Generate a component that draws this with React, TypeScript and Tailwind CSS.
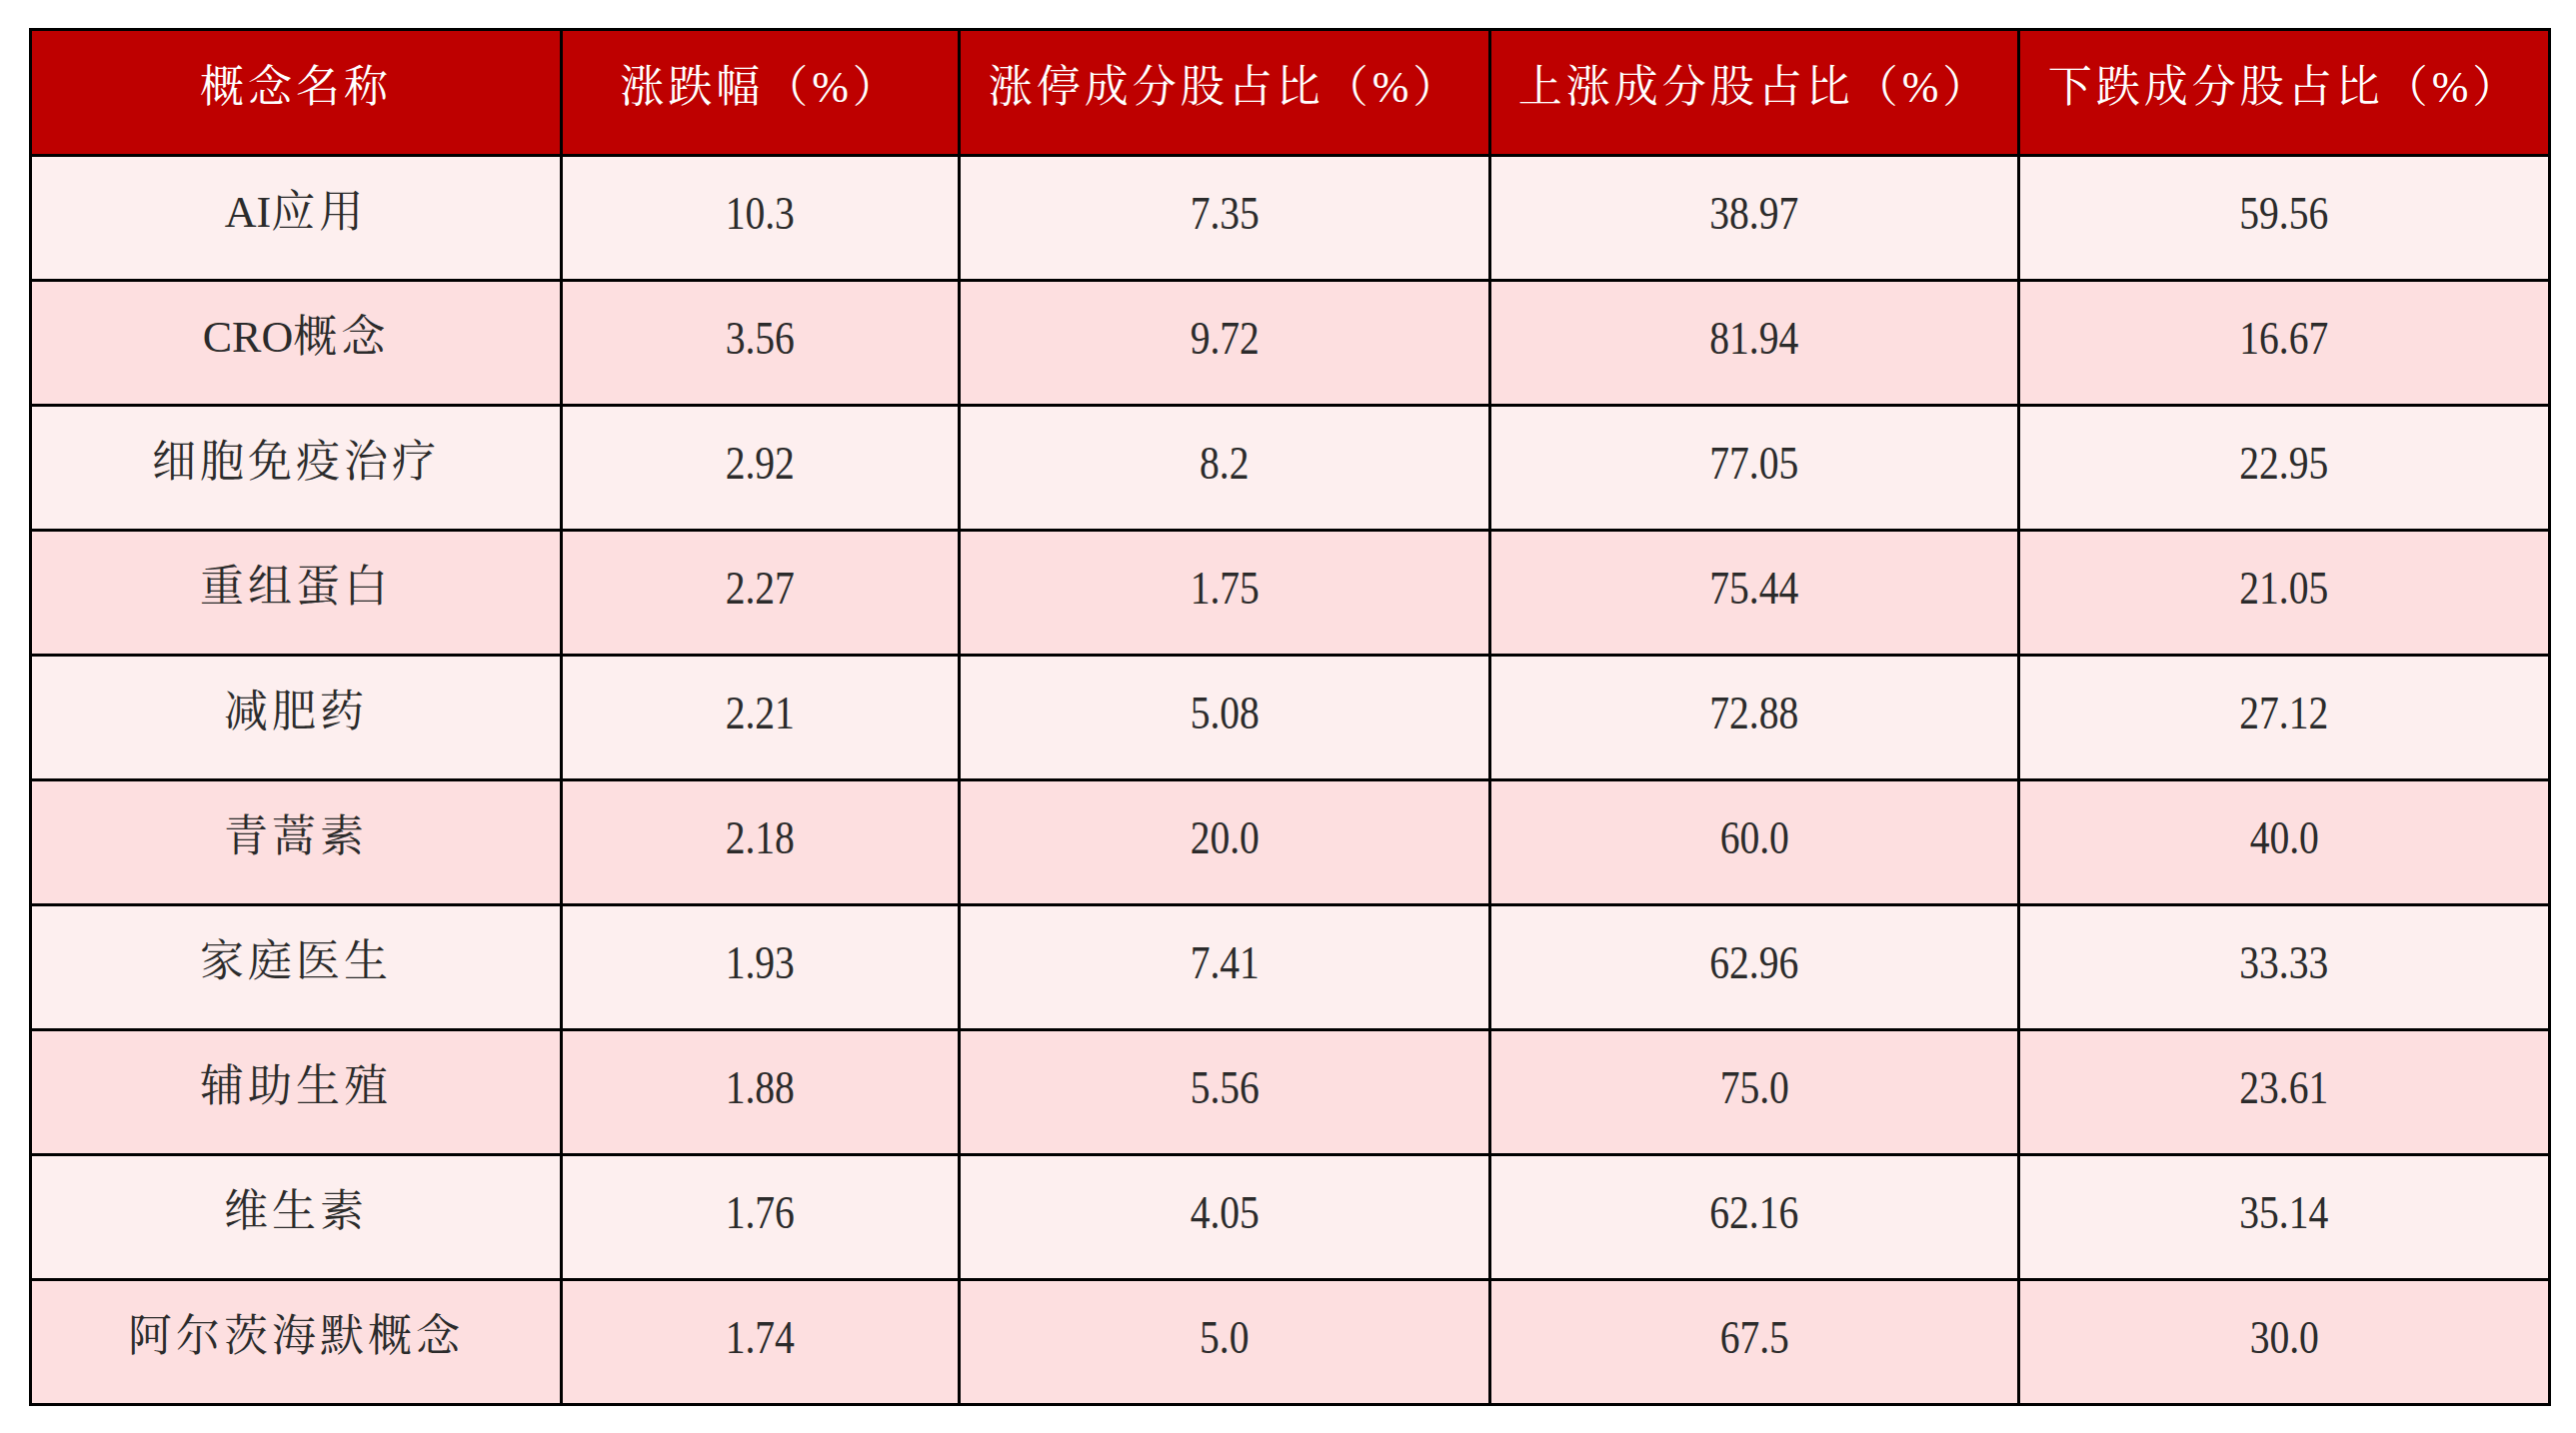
import React from "react";

const headers = ["概念名称", "涨跌幅（%）", "涨停成分股占比（%）", "上涨成分股占比（%）", "下跌成分股占比（%）"];

const rows: string[][] = [
  ["AI应用", "10.3", "7.35", "38.97", "59.56"],
  ["CRO概念", "3.56", "9.72", "81.94", "16.67"],
  ["细胞免疫治疗", "2.92", "8.2", "77.05", "22.95"],
  ["重组蛋白", "2.27", "1.75", "75.44", "21.05"],
  ["减肥药", "2.21", "5.08", "72.88", "27.12"],
  ["青蒿素", "2.18", "20.0", "60.0", "40.0"],
  ["家庭医生", "1.93", "7.41", "62.96", "33.33"],
  ["辅助生殖", "1.88", "5.56", "75.0", "23.61"],
  ["维生素", "1.76", "4.05", "62.16", "35.14"],
  ["阿尔茨海默概念", "1.74", "5.0", "67.5", "30.0"],
];

const font = {
  fontFamily:
    '"Liberation Serif", "Noto Serif CJK SC", "Noto Sans CJK SC", serif',
};

function Name({ text }: { text: string }) {
  const m = text.match(/^([A-Za-z]+)(.*)$/);
  if (!m) return <span className="tracking-[4px]">{text}</span>;
  return (
    <>
      <span className="tracking-normal">{m[1]}</span>
      <span className="tracking-[4px]">{m[2]}</span>
    </>
  );
}

export default function App() {
  return (
    <div className="w-[2577px] h-[1434px] bg-white pl-[29px] pt-[28px]" style={font}>
      <table className="table-fixed border-collapse w-[2520px] border-[3px] border-black">
        <colgroup>
          <col className="w-[531px]" />
          <col className="w-[398px]" />
          <col className="w-[531px]" />
          <col className="w-[529px]" />
          <col className="w-[531px]" />
        </colgroup>
        <thead>
          <tr className="bg-[#be0000]">
            {headers.map((h) => (
              <th
                key={h}
                className="h-[126px] pb-[10px] border-[3px] border-black text-white font-normal text-[44px] tracking-[4px] text-center align-middle"
              >
                {h}
              </th>
            ))}
          </tr>
        </thead>
        <tbody>
          {rows.map((r, i) => (
            <tr key={r[0]} className={i % 2 === 0 ? "bg-[#fdefef]" : "bg-[#fddfe0]"}>
              {r.map((c, j) => (
                <td
                  key={j}
                  className={
                    "h-[125px] pb-[10px] border-[3px] border-black text-[#2b2b2b] text-center align-middle " +
                    (j === 0 ? "text-[44px]" : "text-[46px]")
                  }
                >
                  {j === 0 ? (
                    <Name text={c} />
                  ) : (
                    <span className="inline-block scale-x-[0.86]">{c}</span>
                  )}
                </td>
              ))}
            </tr>
          ))}
        </tbody>
      </table>
    </div>
  );
}
